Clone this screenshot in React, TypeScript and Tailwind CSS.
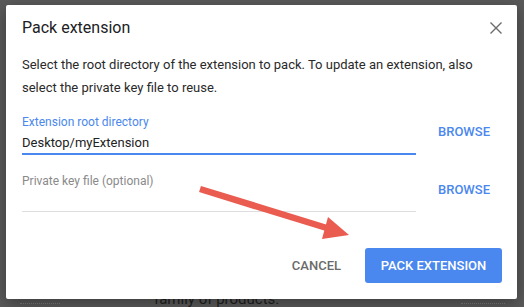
import React from 'react';

const CloseIcon: React.FC = () => (
  <svg width="12" height="12" viewBox="0 0 12 12" className="block">
    <path d="M0.5 0.5 L11.5 11.5 M11.5 0.5 L0.5 11.5" stroke="#6b6b6b" strokeWidth="1.4" fill="none" />
  </svg>
);

const App: React.FC = () => {
  return (
    <div className="relative w-[524px] h-[307px] overflow-hidden bg-[#5a5a5a] font-['Roboto',sans-serif]">
      {/* page behind the scrim */}
      <div className="absolute left-[154px] top-[290px] text-[15px] leading-[18px] text-[#1e1e1e]">family of products.</div>
      <div className="absolute left-[20px] top-[303px] w-[40px] border-b border-dotted border-[#7a7a7a]" />
      <div className="absolute left-[461px] top-[303px] w-[44px] border-b border-dotted border-[#7a7a7a]" />

      {/* dialog */}
      <div className="relative ml-[6px] mt-[5px] w-[511px] h-[294px] bg-white rounded-[2px] shadow-[0_4px_16px_rgba(0,0,0,0.35)] flex flex-col px-[16px]">
        <div className="flex items-start justify-between pt-[13px]">
          <h1 className="text-[16px] leading-[20px] text-[#202124]">Pack extension</h1>
          <button className="mt-[4px] mr-[-1px] p-0">
            <CloseIcon />
          </button>
        </div>

        <p className="mt-[15px] text-[13px] leading-[23px] text-[#2a2a2a]">
          Select the root directory of the extension to pack. To update an extension, also select the private key file to reuse.
        </p>

        <div className="mt-[15px] flex items-center">
          <div className="w-[394px] flex flex-col">
            <span className="text-[12px] leading-[16px] text-[#4a87ee]">Extension root directory</span>
            <span className="mt-[4px] text-[13px] leading-[18px] text-[#222] pb-[1px] border-b-2 border-[#4a87ee]">Desktop/myExtension</span>
          </div>
          <button className="ml-[22px] text-[13px] leading-[16px] font-medium text-[#4a87ee] mt-[-6px]">BROWSE</button>
        </div>

        <div className="mt-[18px] flex items-start">
          <div className="w-[394px] flex flex-col">
            <span className="text-[12px] leading-[16px] text-[#8a8a8a]">Private key file (optional)</span>
            <div className="mt-[22px] border-b border-[#dedede]" />
          </div>
          <button className="ml-[22px] mt-[9px] text-[13px] leading-[16px] font-medium text-[#4a87ee]">BROWSE</button>
        </div>

        <div className="mt-auto mb-[16px] flex justify-end items-center gap-[8px]">
          <button className="h-[35px] px-[16px] text-[13px] font-medium text-[#6a6a6a]">CANCEL</button>
          <button className="h-[35px] w-[137px] mr-[-1px] rounded-[3px] bg-[#4a87ee] text-[13px] font-medium text-white">PACK EXTENSION</button>
        </div>
      </div>

      {/* annotation arrow */}
      <svg className="absolute left-0 top-0 pointer-events-none" width="524" height="307" viewBox="0 0 524 307">
        <line x1="200" y1="189" x2="330" y2="229" stroke="#ea5b50" strokeWidth="6.5" />
        <polygon points="349,235 328,217 322,239" fill="#ea5b50" />
      </svg>
    </div>
  );
};

export default App;
